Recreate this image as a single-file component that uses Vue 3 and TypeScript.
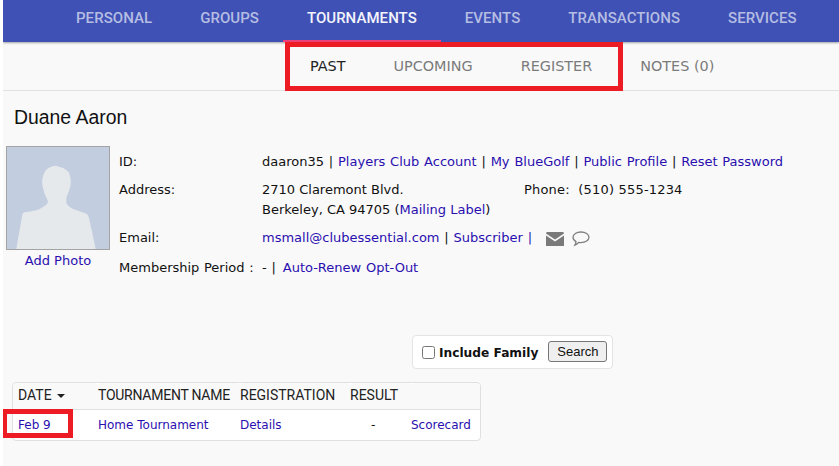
<script setup lang="ts">
const navItems: string[] = ['PERSONAL', 'GROUPS', 'TOURNAMENTS', 'EVENTS', 'TRANSACTIONS', 'SERVICES']
const subItems: string[] = ['PAST', 'UPCOMING', 'REGISTER', 'NOTES (0)']
</script>

<template>
  <div class="page">
    <nav class="nav">
      <a v-for="n in navItems" :key="n" class="nav-item" :class="{ active: n === 'TOURNAMENTS' }">{{ n }}</a>
    </nav>
    <div class="subnav">
      <a v-for="s in subItems" :key="s" class="sub-item" :class="{ active: s === 'PAST' }">{{ s }}</a>
      <div class="mark mark-sub"></div>
    </div>
    <h1 class="name">Duane Aaron</h1>
    <section class="profile">
      <div class="photo-col">
        <div class="photo">
          <svg width="102" height="102" viewBox="0 0 102 102">
            <rect width="102" height="102" fill="#c3cde0" />
            <path d="M49.300 18.700C52 20 55 20 57.700 22C61 24 62.700 26 62.700 28C63.700 31 64 34 63.700 37C63 42 61 46 59.300 51L59.300 56C61 59 63 60.500 66 62C71 64 75.500 65 79.300 66.700C81 67.500 81.500 69 82 71L88.700 102H9.300L15.300 67.700C15.800 66 16.500 65.500 17.700 65.300C23 64.500 28 64 32.700 62C35.500 60.500 38 58.500 40.300 56.700L41 54.300C39 50 37 46 36 41C35.200 37 35 35 35.300 32.700C35.800 29 37 25.500 39.300 22.700C42 20 46 19 49.300 18.700Z" fill="#e6e9ec" />
          </svg>
        </div>
        <a class="link add-photo">Add Photo</a>
      </div>
      <div class="details">
        <div class="row row-id">
          <span class="label">ID:</span>
          <span class="wide">daaron35 | <a class="link">Players Club Account</a> | <a class="link">My BlueGolf</a> | <a class="link">Public Profile</a> | <a class="link">Reset Password</a></span>
        </div>
        <div class="row row-address">
          <span class="label">Address:</span>
          <div class="address">
            <div class="addr-line">
              <span class="street">2710 Claremont Blvd.</span>
              <span class="phone">Phone:&nbsp; (510) 555-1234</span>
            </div>
            <div>Berkeley, CA 94705 (<a class="link">Mailing Label</a>)</div>
          </div>
        </div>
        <div class="row row-email">
          <span class="label">Email:</span>
          <span class="email-val">
            <span class="wide"><a class="link">msmall@clubessential.com</a> | <a class="link">Subscriber</a> <span class="link">|</span></span>
            <svg class="ic-mail" width="18" height="14" viewBox="0 0 18 14">
              <path d="M0 1.500C0 .7.7 0 1.500 0h15c.8 0 1.500.7 1.500 1.500L9 7.500z" fill="#7a7a7a" />
              <path d="M0 3.500V14h18V3.500L9 9.500z" fill="#7a7a7a" />
            </svg>
            <svg class="ic-chat" width="18" height="16" viewBox="0 0 18 16">
              <path d="M9 1C13.400 1 17 3.300 17 6.300S13.400 11.600 9 11.600C8.200 11.600 7.400 11.500 6.700 11.400C5.800 12.600 4.500 13.600 2.900 14.200C3.600 13 3.900 11.900 4 10.600C2.100 9.700 1 8.100 1 6.300C1 3.300 4.600 1 9 1Z" fill="none" stroke="#7f7f7f" stroke-width="1.300" />
            </svg>
          </span>
        </div>
        <div class="row row-member">
          <span class="label-auto">Membership Period :</span>
          <span class="wide">- | <a class="link opt-out">Auto-Renew Opt-Out</a></span>
        </div>
      </div>
    </section>
    <div class="search-wrap">
      <div class="search-box">
        <label class="family"><input type="checkbox" class="check" /><b class="family-text">Include Family</b></label>
        <button class="search-btn" type="button">Search</button>
      </div>
    </div>
    <div class="table-wrap">
      <table class="results">
        <thead>
          <tr>
            <th class="c-date">DATE <span class="caret"></span></th>
            <th class="c-name">TOURNAMENT NAME</th>
            <th class="c-reg">REGISTRATION</th>
            <th class="c-res">RESULT</th>
            <th class="c-card"></th>
          </tr>
        </thead>
        <tbody>
          <tr>
            <td class="c-date"><a class="link">Feb 9</a></td>
            <td class="c-name"><a class="link">Home Tournament</a></td>
            <td class="c-reg"><a class="link">Details</a></td>
            <td class="c-res dash">-</td>
            <td class="c-card"><a class="link">Scorecard</a></td>
          </tr>
        </tbody>
      </table>
      <div class="mark mark-date"></div>
    </div>
  </div>
</template>

<style scoped>
.page {
  width: 836px;
  height: 466px;
  margin-left: 3px;
  background: #f9f9f9;
  font-family: "DejaVu Sans", Verdana, sans-serif;
  font-size: 13px;
  color: #111;
  overflow: hidden;
}
.nav {
  height: 42px;
  background: #3f51b5;
  box-shadow: 0 1px 2px rgba(0, 0, 0, 0.35);
  display: flex;
  padding-left: 49px;
  position: relative;
}
.nav-item {
  font-family: Roboto, sans-serif;
  font-weight: 500;
  font-size: 15px;
  letter-spacing: 0.05px;
  line-height: 37px;
  color: #b5bde3;
  padding: 0 24px;
  white-space: nowrap;
  position: relative;
}
.nav-item.active {
  color: #f3f4fb;
}
.nav-item.active::after {
  content: "";
  position: absolute;
  left: 0;
  right: 0;
  bottom: 0;
  height: 2px;
  background: #ec407a;
}
.subnav {
  height: 48px;
  border-bottom: 1px solid #e2e2e2;
  display: flex;
  align-items: center;
  padding-left: 307px;
  position: relative;
}
.sub-item {
  font-size: 14.4px;
  color: #7b7b7b;
  margin-right: 48px;
  white-space: nowrap;
}
.sub-item.active {
  color: #222;
}
.mark {
  position: absolute;
  border: 5px solid #ed1c24;
  box-sizing: border-box;
  pointer-events: none;
}
.mark-sub {
  left: 282px;
  top: 0;
  width: 338px;
  height: 49px;
}
.name {
  margin: 14px 0 0 11px;
  font-family: "Liberation Sans", Arial, sans-serif;
  font-weight: 400;
  font-size: 19.4px;
  line-height: 24px;
  color: #111;
}
.profile {
  display: flex;
  margin-top: 17px;
  height: 165px;
}
.photo-col {
  width: 104px;
  margin-left: 3px;
  display: flex;
  flex-direction: column;
  align-items: center;
}
.photo {
  width: 102px;
  height: 102px;
  border: 1px solid #a3a3a3;
  line-height: 0;
}
.add-photo {
  margin-top: 3px;
}
.details {
  margin-left: 9px;
  flex: 1;
}
.row {
  display: flex;
}
.row-id {
  margin-top: 8px;
}
.row-address {
  margin-top: 12px;
}
.row-email {
  margin-top: 12px;
}
.row-member {
  margin-top: 14px;
}
.label {
  width: 143px;
  flex: none;
}
.label-auto {
  width: 143px;
  flex: none;
  white-space: nowrap;
  word-spacing: 0.5px;
}
.wide {
  word-spacing: 0.7px;
}
.opt-out {
  margin-left: 2px;
}
.phone {
  letter-spacing: 0.18px;
}
.row span, .address {
  line-height: 16px;
}
.address > div + div {
  margin-top: 4px;
}
.addr-line {
  display: flex;
}
.street {
  width: 262px;
}
.email-val {
  display: flex;
  align-items: center;
  height: 16px;
}
.ic-mail {
  margin-left: 14px;
  transform: translateY(1px);
}
.ic-chat {
  margin-left: 8px;
  transform: translateY(1px);
}
.link {
  color: #2a0fb0;
  text-decoration: none;
  white-space: nowrap;
}
.search-wrap {
  margin-left: 409px;
  margin-top: 24px;
}
.search-box {
  width: 201px;
  height: 34px;
  box-sizing: border-box;
  background: #fff;
  border: 1px solid #e4e4e4;
  border-radius: 4px;
  display: flex;
  align-items: center;
  padding-left: 9px;
  gap: 10px;
}
.family {
  display: flex;
  align-items: center;
  font-size: 12.2px;
  color: #111;
}
.family-text {
  margin-top: 2px;
  margin-left: 1px;
}
.check {
  width: 13px;
  height: 13px;
  margin: 0 3px 0 0;
}
.search-btn {
  width: 59px;
  height: 21px;
  padding: 0;
  margin-top: -2px;
  font-family: "Liberation Sans", Arial, sans-serif;
  font-size: 13px;
  color: #111;
  background: #efefef;
  border: 1px solid #767676;
  border-radius: 3px;
}
.table-wrap {
  margin: 13px 0 0 9px;
  width: 469px;
  position: relative;
}
.results {
  width: 469px;
  box-sizing: border-box;
  border-collapse: separate;
  border-spacing: 0;
  border: 1px solid #e0e0e0;
  border-radius: 4px;
  background: #fff;
  table-layout: fixed;
  font-size: 12px;
}
.results th {
  font-family: Roboto, sans-serif;
  font-weight: 400;
  font-size: 14px;
  color: #222;
  background: #f9f9f9;
  height: 27px;
  box-sizing: border-box;
  padding: 0 0 2px;
  text-align: left;
  border-bottom: 1px solid #e0e0e0;
  border-radius: 4px 4px 0 0;
  white-space: nowrap;
}
.results th.c-name {
  letter-spacing: -0.25px;
}
.results td {
  height: 30px;
  padding: 0 0 1px;
  box-sizing: border-box;
}
.c-date { width: 85px; padding-left: 5px !important; box-sizing: border-box; }
.c-name { width: 142px; }
.c-reg { width: 110px; }
.c-res { width: 61px; }
.dash { padding-left: 21px !important; }
.caret {
  display: inline-block;
  width: 0;
  height: 0;
  margin-left: 2px;
  vertical-align: 2px;
  border-left: 4px solid transparent;
  border-right: 4px solid transparent;
  border-top: 4px solid #222;
}
.mark-date {
  left: -10px;
  top: 27px;
  width: 71px;
  height: 29px;
}
</style>

<style>
html, body {
  margin: 0;
  background: #fff;
}
</style>
